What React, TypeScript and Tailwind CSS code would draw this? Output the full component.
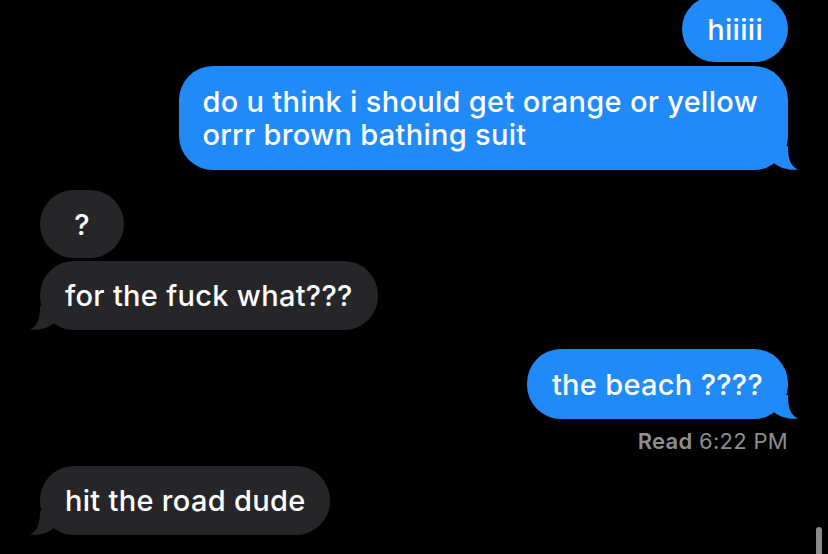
import React from "react";

function Tail({ side, color }: { side: "left" | "right"; color: string }) {
  return (
    <svg
      className={`absolute bottom-0 ${side === "right" ? "right-[-10px]" : "left-[-10px] -scale-x-100"}`}
      width="24"
      height="24"
      viewBox="0 0 24 24"
      aria-hidden="true"
    >
      <path d="M0 0 H14 C14 12 16 20 24 23.6 C16 24.4 6 22.5 0 17 Z" fill={color} />
    </svg>
  );
}

function Sent({ children, tail, className = "" }: { children: React.ReactNode; tail?: boolean; className?: string }) {
  return (
    <div className="flex justify-end">
      <div className={`relative flex items-center rounded-[34px] bg-[#1f8af8] px-[25px] text-white ${className}`}>
        <div>{children}</div>
        {tail && <Tail side="right" color="#1f8af8" />}
      </div>
    </div>
  );
}

function Received({ children, tail, className = "" }: { children: React.ReactNode; tail?: boolean; className?: string }) {
  return (
    <div className="flex justify-start">
      <div className={`relative flex items-center rounded-[34px] bg-[#262629] px-[25px] text-white ${className}`}>
        <div>{children}</div>
        {tail && <Tail side="left" color="#262629" />}
      </div>
    </div>
  );
}

export default function App() {
  return (
    <div className="relative h-[554px] w-[828px] overflow-hidden bg-black font-['Inter','Liberation_Sans',sans-serif] text-[29px] font-medium leading-[33px] tracking-[0.3px]">
      <div className="-mt-[4px] flex flex-col px-[40px]">
        <Sent className="h-[66px]">hiiiii</Sent>
        <Sent tail className="mt-[4px] h-[104px] pl-[23px] pr-[30px]">
          do u think i should get orange or yellow
          <br />
          orrr brown bathing suit
        </Sent>

        <Received className="mt-[20px] h-[68px] w-[84px] justify-center px-0">?</Received>
        <Received tail className="mt-[3px] h-[69px]">for the fuck what???</Received>

        <Sent tail className="mt-[19px] h-[70px]">the beach ????</Sent>
        <div className="mt-[11px] h-[22px] text-right text-[22px] font-normal leading-[22px] tracking-[0.3px] text-[#8e8e93]">
          <span className="font-semibold">Read</span> 6:22 PM
        </div>

        <Received tail className="mt-[14px] h-[69px]">hit the road dude</Received>
      </div>
      {/* scroll indicator */}
      <div className="absolute bottom-0 right-[6px] h-[27px] w-[6px] rounded-t-full bg-[#8a8a8c]" />
    </div>
  );
}
